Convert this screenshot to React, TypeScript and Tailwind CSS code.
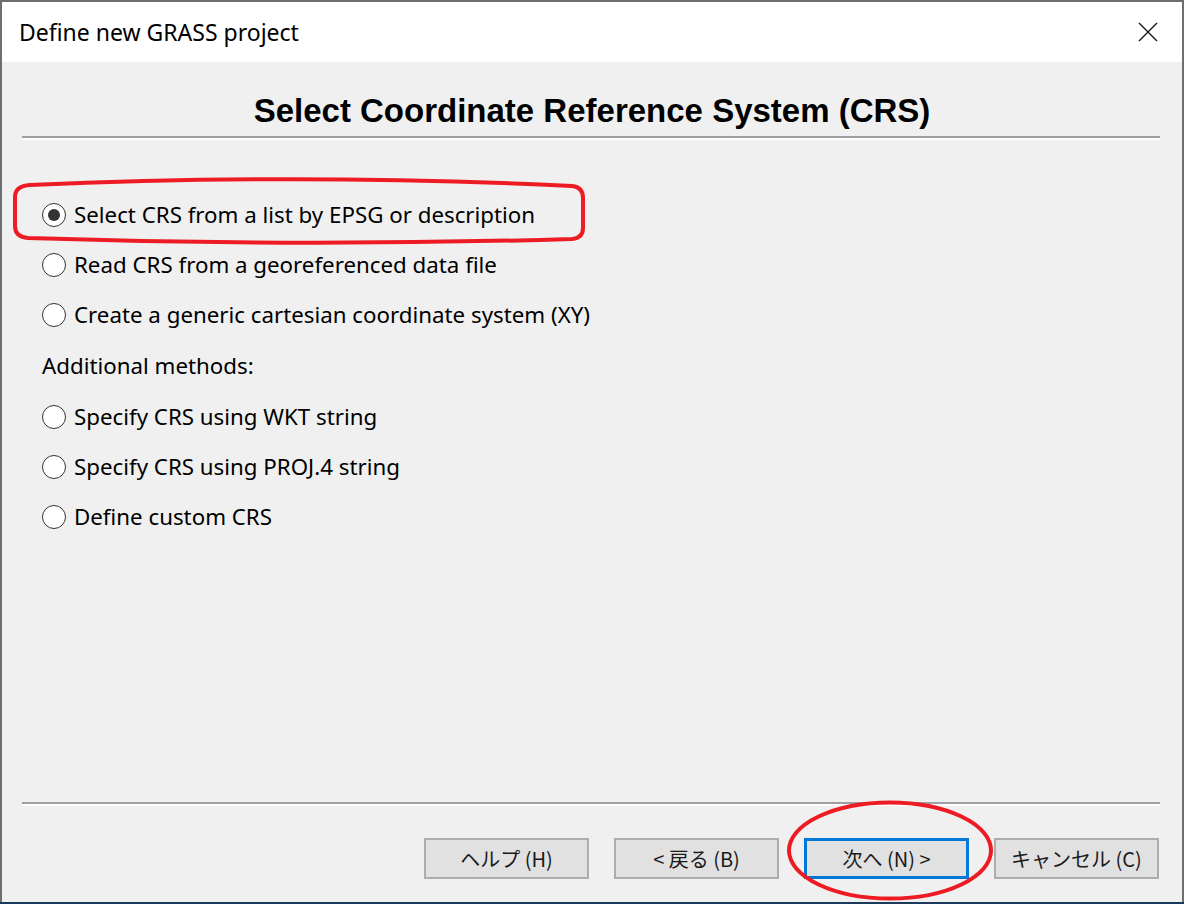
import React from 'react';

const uiFont = { fontFamily: '"Noto Sans", "Open Sans", sans-serif' };
const jpFont = { fontFamily: '"Noto Sans CJK JP", "Noto Sans", sans-serif' };

function Radio({ label, checked = false }: { label: string; checked?: boolean }) {
  return (
    <div className="flex h-[50px] items-center gap-[8px] pl-[40px]">
      <span className="flex h-[24px] w-[24px] items-center justify-center rounded-full border-[1.5px] border-[#333333] bg-white">
        {checked && <span className="h-[12px] w-[12px] rounded-full bg-[#333333]" />}
      </span>
      <span className="text-[22.3px] text-black">{label}</span>
    </div>
  );
}

function WinButton({ label, focused = false }: { label: string; focused?: boolean }) {
  return (
    <button
      className={
        focused
          ? 'flex h-[41px] w-[165px] items-center justify-center border-[3px] border-[#0078d7] bg-[#e1e1e1] text-[20px] text-[#1a1a1a]'
          : 'flex h-[41px] w-[165px] items-center justify-center border-2 border-[#adadad] bg-[#e1e1e1] text-[20px] text-[#1a1a1a]'
      }
      style={jpFont}
    >
      {label}
    </button>
  );
}

function Etched() {
  return (
    <div className="ml-[20px] mr-[22px] flex flex-col">
      <div className="h-[2px] bg-[#a0a0a0]" />
      <div className="h-[2px] bg-white" />
    </div>
  );
}

export default function App() {
  return (
    <div className="relative h-[904px] w-[1184px] overflow-hidden bg-[#1c3b5c]" style={uiFont}>
      <div className="flex h-[902px] flex-col border-x-2 border-t-2 border-[#6f6f6f] bg-[#f0f0f0]">
        {/* タイトルバー */}
        <div className="flex h-[60px] items-center justify-between bg-white pl-[17px] pr-[24px]">
          <span className="text-[23px] text-black">Define new GRASS project</span>
          <svg width="20" height="20" viewBox="0 0 20 20">
            <path d="M1 1 L19 19 M19 1 L1 19" stroke="#1a1a1a" strokeWidth="1.4" fill="none" />
          </svg>
        </div>

        {/* 見出し */}
        <div className="pt-[32px] pb-[8px] text-center">
          <h1
            className="text-[33px] font-bold leading-[34px] text-black"
            style={{ fontFamily: '"Liberation Sans", Arial, sans-serif' }}
          >
            Select Coordinate Reference System (CRS)
          </h1>
        </div>
        <Etched />

        {/* 選択肢 */}
        <div className="mt-[50px] flex flex-col">
          <Radio label="Select CRS from a list by EPSG or description" checked />
          <Radio label="Read CRS from a georeferenced data file" />
          <Radio label="Create a generic cartesian coordinate system (XY)" />
          <div className="flex h-[52px] items-center pl-[40px] text-[22.3px] text-black">Additional methods:</div>
          <Radio label="Specify CRS using WKT string" />
          <Radio label="Specify CRS using PROJ.4 string" />
          <Radio label="Define custom CRS" />
        </div>

        <div className="flex-1" />
        <Etched />

        {/* ボタン */}
        <div className="mt-[32px] mb-[23px] flex justify-end gap-[25px] pr-[23px]">
          <WinButton label="ヘルプ (H)" />
          <WinButton label="< 戻る (B)" />
          <WinButton label="次へ (N) >" focused />
          <WinButton label="キャンセル (C)" />
        </div>
      </div>

      {/* 赤い手書き風の囲み */}
      <svg className="pointer-events-none absolute left-0 top-0" width="1184" height="904" viewBox="0 0 1184 904">
        <path
          d="M30 185 Q300 173 572 186 Q583 187 583 198 L583 228 Q583 238 572 239 Q300 247 28 238 Q15 237 15 226 L15 197 Q15 186 30 185 Z"
          fill="none"
          stroke="#ed1c24"
          strokeWidth="4"
        />
        <ellipse cx="890" cy="850.5" rx="101" ry="48" fill="none" stroke="#ed1c24" strokeWidth="4" />
      </svg>
    </div>
  );
}
